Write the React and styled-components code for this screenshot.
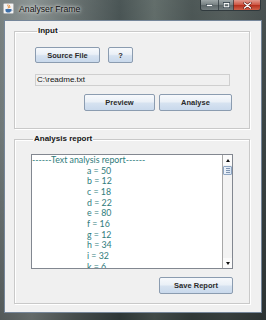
import React from "react";
import styled, { createGlobalStyle } from "styled-components";

const GlobalStyle = createGlobalStyle`
  html, body { margin: 0; padding: 0; background: #3c4646; }
  * { box-sizing: border-box; }
`;

const Window = styled.div`
  width: 266px;
  height: 320px;
  display: flex;
  flex-direction: column;
  background:
    linear-gradient(180deg, rgba(255,255,255,0.08) 0%, rgba(0,0,0,0) 40%, rgba(0,0,0,0.25) 100%),
    linear-gradient(90deg, #6f7878 0%, #838c8b 12%, #5c6665 28%, #3c4848 45%, #56625f 58%, #3f4a49 72%, #485250 85%, #3a4343 100%);
  font-family: "Liberation Sans", Arial, sans-serif;
`;

const TitleBar = styled.div`
  height: 20px;
  flex: none;
  display: flex;
  align-items: flex-start;
  padding-left: 3px;
`;

const AppIcon = styled.svg`
  width: 11px;
  height: 11px;
  margin-top: 3px;
  flex: none;
`;

const Title = styled.span`
  margin-left: 5px;
  margin-top: 4px;
  font-size: 8.7px;
  color: #101010;
  text-shadow: 0 0 3px rgba(255,255,255,0.9), 0 0 5px rgba(255,255,255,0.7);
  flex: 1;
`;

const Controls = styled.div`
  display: flex;
  margin-right: 5px;
  height: 11px;
  border: 1px solid rgba(40,50,55,0.8);
  border-top: none;
  border-radius: 0 0 3px 3px;
  overflow: hidden;
`;

const CtrlButton = styled.div`
  width: ${(p) => p.$w}px;
  height: 100%;
  display: flex;
  align-items: center;
  justify-content: center;
  background: ${(p) =>
    p.$close
      ? "linear-gradient(180deg, #e19b8f 0%, #cf5a48 45%, #b7321f 55%, #d0614a 100%)"
      : "linear-gradient(180deg, rgba(220,228,232,0.55) 0%, rgba(170,180,186,0.45) 45%, rgba(110,120,126,0.45) 55%, rgba(150,160,166,0.5) 100%)"};
  border-left: ${(p) => (p.$first ? "none" : "1px solid rgba(40,50,55,0.7)")};
`;

const Client = styled.div`
  flex: 1;
  margin: 0 4px 7px 4px;
  background: #f0f0f0;
  border: 1px solid #75869a;
  display: flex;
  flex-direction: column;
  padding: 5px 11px 0 9px;
  gap: 5px;
`;

const Group = styled.fieldset`
  margin: 0;
  min-width: 0;
  border: 1px solid #c9c9c9;
  box-shadow: inset 1px 1px 0 #ffffff, 1px 1px 0 #ffffff;
  padding: ${(p) => p.$pad};
  display: flex;
  flex-direction: column;
`;

const Legend = styled.legend`
  font-size: 8px;
  font-weight: bold;
  line-height: 10px;
  color: #151515;
  padding: 0 1px;
  margin-left: 2px;
`;

const Row = styled.div`
  display: flex;
  gap: ${(p) => p.$gap}px;
  justify-content: ${(p) => (p.$end ? "flex-end" : "flex-start")};
  margin-top: ${(p) => p.$mt || 0}px;
`;

const Button = styled.div`
  width: ${(p) => p.$w}px;
  height: ${(p) => p.$h}px;
  display: flex;
  align-items: center;
  justify-content: center;
  border: 1px solid #8b9cb0;
  border-radius: 2px;
  background: linear-gradient(180deg, #f7f9fc 0%, #eaf0f7 45%, #d6e2f0 55%, #c9d9ec 100%);
  font-size: 7.5px;
  font-weight: bold;
  color: #2a2a2a;
  flex: none;
`;

const Field = styled.div`
  width: 195px;
  height: 12px;
  margin-top: 11px;
  border: 1px solid #cfcfcf;
  background: #f0f0f0;
  font-size: 8px;
  line-height: 10px;
  padding-left: 1px;
  color: #111;
`;

const TextArea = styled.div`
  height: 115px;
  border: 1px solid #828790;
  background: #ffffff;
  display: flex;
`;

const Viewport = styled.div`
  flex: 1;
  overflow: hidden;
  font-family: Lato, "Open Sans", sans-serif;
  font-size: 8.8px;
  line-height: 10.67px;
  color: #2f7c7c;
`;

const ReportLine = styled.div`
  padding-left: ${(p) => p.$indent}px;
  white-space: pre;
`;

const ScrollBar = styled.div`
  width: 10px;
  flex: none;
  display: flex;
  flex-direction: column;
  border-left: 1px solid #a8a8a8;
  background: #f3f3f3;
`;

const ArrowBox = styled.div`
  height: 10px;
  display: flex;
  align-items: center;
  justify-content: center;
  background: #fbfbfb;
`;

const Arrow = styled.div`
  width: 0;
  height: 0;
  border-left: 2.5px solid transparent;
  border-right: 2.5px solid transparent;
  ${(p) =>
    p.$up
      ? "border-bottom: 3px solid #111;"
      : "border-top: 3px solid #111;"}
`;

const Thumb = styled.div`
  height: 9px;
  margin: 1px 0 0 0;
  border: 1px solid #8fa6c3;
  border-radius: 1px;
  background: linear-gradient(90deg, #eef3f9, #d8e4f2);
  display: flex;
  flex-direction: column;
  justify-content: center;
  align-items: center;
  gap: 1px;
`;

const Grip = styled.div`
  width: 4px;
  height: 1px;
  background: #7f95b2;
`;

const Track = styled.div`
  flex: 1;
`;

const lines = [
  "a = 50", "b = 12", "c = 18", "d = 22", "e = 80", "f = 16",
  "g = 12", "h = 34", "i = 32", "k = 6",
];

export default function App() {
  return (
    <>
      <GlobalStyle />
      <Window>
        <TitleBar>
          <AppIcon viewBox="0 0 11 11">
            <rect x="0.5" y="0.5" width="10" height="10" rx="1" fill="#f4f4f4" stroke="#b0b0b0" strokeWidth="0.6" />
            <path d="M5 1.5 C4 3 6.5 3.5 5 5.5 M6.5 2 C6 3 7.5 3.6 6.6 5" stroke="#e07a1a" strokeWidth="0.9" fill="none" />
            <path d="M2.5 6 H8 V7.5 C8 9 7 9.5 5.3 9.5 C3.6 9.5 2.5 9 2.5 7.5 Z" fill="#3b6ea8" />
            <path d="M8 6.5 C9.3 6.5 9.3 8 8 8" stroke="#3b6ea8" strokeWidth="0.7" fill="none" />
          </AppIcon>
          <Title>Analyser Frame</Title>
          <Controls>
            <CtrlButton $w={17} $first>
              <svg width="7" height="3" viewBox="0 0 7 3">
                <rect x="0.5" y="0.5" width="6" height="2" fill="#fff" stroke="#33414a" strokeWidth="0.6" />
              </svg>
            </CtrlButton>
            <CtrlButton $w={15}>
              <svg width="7" height="6" viewBox="0 0 7 6">
                <rect x="0.5" y="0.5" width="6" height="5" fill="none" stroke="#33414a" strokeWidth="1" />
                <rect x="1.2" y="1.4" width="4.6" height="3.4" fill="none" stroke="#fff" strokeWidth="1" />
              </svg>
            </CtrlButton>
            <CtrlButton $w={27} $close>
              <svg width="9" height="7" viewBox="0 0 9 7">
                <path d="M1.5 1 L7.5 6 M7.5 1 L1.5 6" stroke="#5a1a12" strokeWidth="2.4" strokeLinecap="round" />
                <path d="M1.5 1 L7.5 6 M7.5 1 L1.5 6" stroke="#fff" strokeWidth="1.4" strokeLinecap="round" />
              </svg>
            </CtrlButton>
          </Controls>
        </TitleBar>
        <Client>
          <Group $pad="11px 17px 17px 20px">
            <Legend>Input</Legend>
            <Row $gap={8}>
              <Button $w={65} $h={16}>Source File</Button>
              <Button $w={25} $h={16}>?</Button>
            </Row>
            <Field>C:\readme.txt</Field>
            <Row $gap={4} $end $mt={8}>
              <Button $w={71} $h={17}>Preview</Button>
              <Button $w={73} $h={17}>Analyse</Button>
            </Row>
          </Group>
          <Group $pad="10px 16px 9px 16px">
            <Legend>Analysis report</Legend>
            <TextArea>
              <Viewport>
                <ReportLine $indent={0}>------Text analysis report------</ReportLine>
                {lines.map((l) => (
                  <ReportLine key={l} $indent={55}>{l}</ReportLine>
                ))}
              </Viewport>
              <ScrollBar>
                <ArrowBox><Arrow $up /></ArrowBox>
                <Thumb><Grip /><Grip /><Grip /></Thumb>
                <Track />
                <ArrowBox><Arrow /></ArrowBox>
              </ScrollBar>
            </TextArea>
            <Row $end $mt={8}>
              <Button $w={74} $h={17}>Save Report</Button>
            </Row>
          </Group>
        </Client>
      </Window>
    </>
  );
}
